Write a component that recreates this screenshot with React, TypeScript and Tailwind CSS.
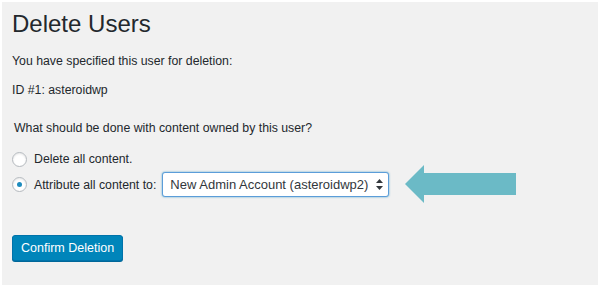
export default function App() {
  return (
    <div className="w-[601px] h-[287px] bg-white p-[2px] pr-[3px]" style={{ fontFamily: '"Liberation Sans", Arial, sans-serif' }}>
      <div className="h-full bg-[#f1f1f1] text-[#23282d] pl-[10px] pt-[7px]">
        <h1 className="text-[24px] leading-[29px] font-normal">Delete Users</h1>

        <p className="text-[12.3px] mt-[14px] leading-[19px]">You have specified this user for deletion:</p>
        <p className="text-[12.3px] mt-[10px] leading-[19px]">ID #1: asteroidwp</p>

        <p className="text-[12.3px] mt-[19px] leading-[19px] pl-[2px]">What should be done with content owned by this user?</p>

        <div className="mt-[12px] flex items-center gap-[7px]">
          <span className="w-[15px] h-[15px] rounded-full border border-[#b4b9be] bg-white shadow-[inset_0_1px_2px_rgba(0,0,0,0.1)]" />
          <span className="text-[12.3px]">Delete all content.</span>
        </div>

        <div className="mt-[4px] flex items-center">
          <span className="w-[15px] h-[15px] rounded-full border border-[#b4b9be] bg-white flex items-center justify-center shadow-[inset_0_1px_2px_rgba(0,0,0,0.1)]">
            <span className="w-[5px] h-[5px] rounded-full bg-[#1e8cbe]" />
          </span>
          <span className="text-[12.3px] ml-[7px]">Attribute all content to:</span>
          <div className="ml-[6px] w-[227px] h-[25px] rounded-[3px] border border-[#5b9dd9] bg-white shadow-[0_0_2px_rgba(30,140,190,0.8)] flex items-center justify-between pl-[7px] pr-[5px]">
            <span className="text-[13px] text-[#32373c]">New Admin Account (asteroidwp2)</span>
            <svg width="7" height="11" viewBox="0 0 7 11">
              <path d="M3.5 0L7 4H0z M3.5 11L0 7h7z" fill="#32373c" />
            </svg>
          </div>
          <svg className="ml-[16px] -my-[7px]" width="112" height="39" viewBox="0 0 112 39">
            <path d="M0 19 L19 0 L19 8 L111 8 L111 30 L19 30 L19 38 Z" fill="#6bbac6" />
          </svg>
        </div>

        <button className="mt-[38px] h-[26px] px-[8px] rounded-[3px] bg-[#0085ba] border border-[#0073aa] text-white text-[12.5px] shadow-[0_1px_0_#006799]">
          Confirm Deletion
        </button>
      </div>
    </div>
  );
}
